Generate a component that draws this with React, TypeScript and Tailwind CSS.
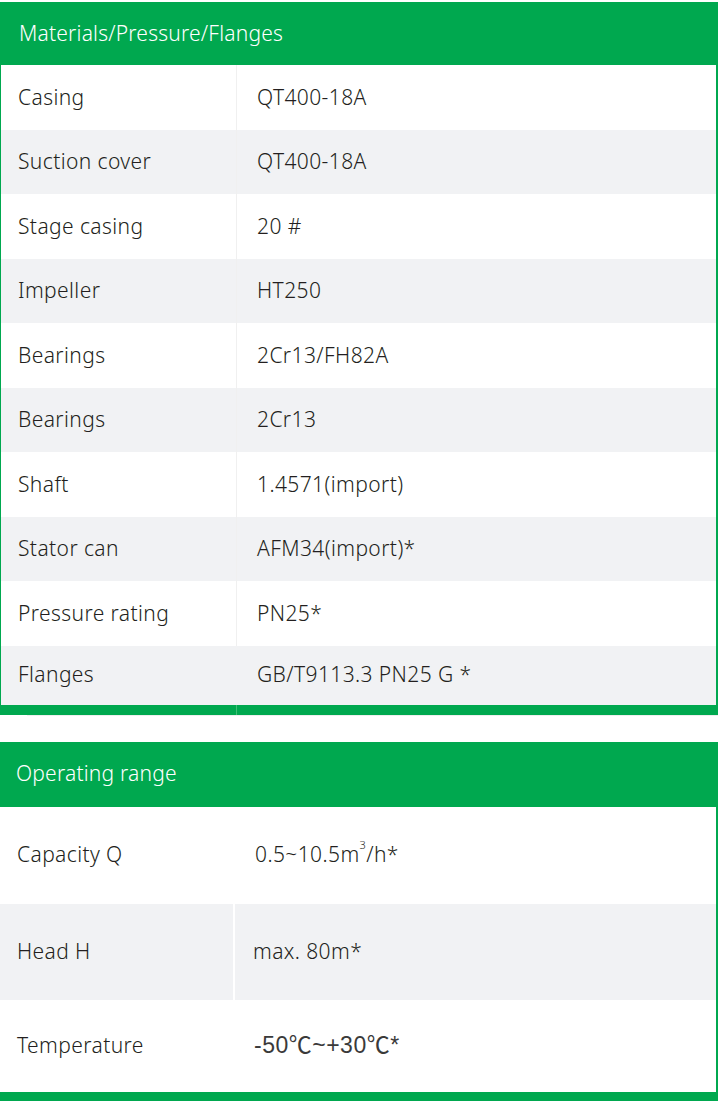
const MATERIALS = [
  ["Casing", "QT400-18A"],
  ["Suction cover", "QT400-18A"],
  ["Stage casing", "20 #"],
  ["Impeller", "HT250"],
  ["Bearings", "2Cr13/FH82A"],
  ["Bearings", "2Cr13"],
  ["Shaft", "1.4571(import)"],
  ["Stator can", "AFM34(import)*"],
  ["Pressure rating", "PN25*"],
];

const font = { fontFamily: '"Noto Sans", "Open Sans", sans-serif' };

export default function App() {
  return (
    <div className="w-[718px] h-[1101px] bg-white overflow-hidden text-[#231f20]" style={font}>
      {/* Materials table */}
      <div className="mt-[2px] w-[718px] border-l border-r-2 border-[#00a84f]">
        <div className="h-[63px] bg-[#00a84f] flex items-center pl-[18px] text-white text-[21px] font-[350] tracking-[0.2px]">
          Materials/Pressure/Flanges
        </div>
        {MATERIALS.map(([k, v], i) => (
          <div
            key={i}
            className={`h-[64.5px] flex items-center text-[21px] font-[350] tracking-[0.4px] ${i % 2 ? "bg-[#f1f2f4]" : "bg-white"}`}
          >
            <div className="w-[236px] h-full flex items-center pl-[17px] border-r border-[#f0f0f0]">{k}</div>
            <div className="pl-[20px]">{v}</div>
          </div>
        ))}
        <div className="h-[59px] flex items-center text-[21px] font-[350] tracking-[0.4px] bg-[#f1f2f4]">
          <div className="w-[236px] pl-[17px]">Flanges</div>
          <div className="pl-[20px]">GB/T9113.3 PN25 G *</div>
        </div>
      </div>
      <div className="h-[10px] w-[718px] bg-[#00a84f] flex">
        <div className="w-[237px] border-r border-[#3fbf75]" />
      </div>
      <div className="h-px ml-[27px] bg-[#eeeeee]" />

      {/* Operating range */}
      <div className="mt-[26px] w-[718px] border-r-2 border-[#00a84f]">
        <div className="h-[65px] bg-[#00a84f] flex items-center pl-[16px] text-white text-[21px] font-[350] tracking-[0.2px]">
          Operating range
        </div>
        <div className="h-[97px] flex items-center text-[21px] font-[350] tracking-[0.4px] bg-white">
          <div className="w-[235px] pl-[17px]">Capacity Q</div>
          <div className="pl-[20px]">
            0.5~10.5m<sup className="text-[11px] align-super">3</sup>/h*
          </div>
        </div>
        <div className="h-[96px] flex items-center text-[21px] font-[350] tracking-[0.4px] bg-[#f1f2f4]">
          <div className="w-[235px] h-full flex items-center pl-[17px] border-r-2 border-white">Head H</div>
          <div className="pl-[18px]">max. 80m*</div>
        </div>
        <div className="h-[92px] flex items-center text-[21px] font-[350] tracking-[0.4px] bg-white">
          <div className="w-[235px] pl-[17px]">Temperature</div>
          <div
            className="pl-[19px] text-[23px] font-normal tracking-[0.5px] text-[#3a3a3a]"
            style={{ fontFamily: '"Liberation Sans", "Noto Sans CJK SC", Arial, sans-serif' }}
          >
            -50℃~+30℃*
          </div>
        </div>
      </div>
      <div className="h-[10px] w-[718px] bg-[#00a84f]" />
    </div>
  );
}
